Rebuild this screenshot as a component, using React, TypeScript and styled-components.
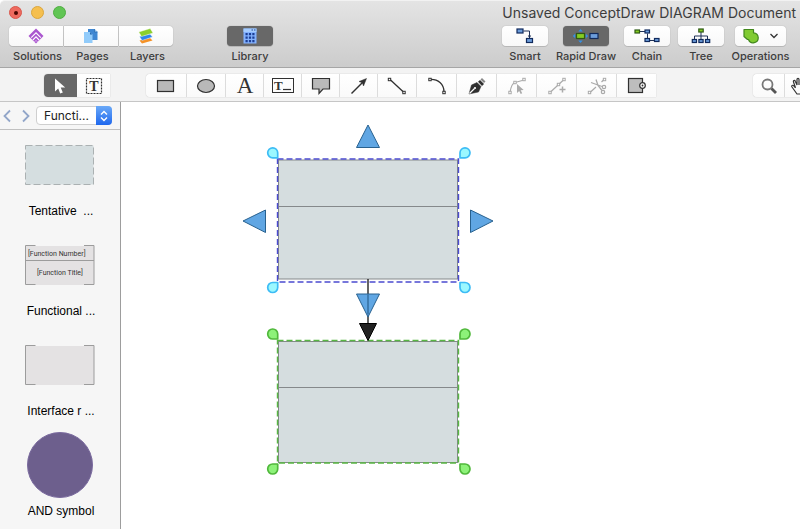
import React, { ReactNode } from 'react';
import styled, { createGlobalStyle, css } from 'styled-components';

const GlobalStyle = createGlobalStyle`
  *, *::before, *::after { box-sizing: border-box; }
  body { margin: 0; background: #fff; font-family: Inter, sans-serif; }
  button, select { font: inherit; color: inherit; }
  svg { display: block; flex: none; }
`;

const Window = styled.div`
  display: flex;
  flex-direction: column;
  min-height: 100vh;
  overflow: hidden;
  background: #fff;
`;

const Header = styled.header`
  background: linear-gradient(#e4e4e4, #cccccc);
  border-top: 1px solid #f2f2f2;
  border-bottom: 1px solid #a6a6a6;
  border-top-left-radius: 5px;
  color: #3d3d3d;
`;

const TitleBar = styled.div`
  display: flex;
  justify-content: space-between;
  align-items: center;
  height: 23px;
  padding: 0 4px 0 9px;
`;

const Lights = styled.div`
  display: flex;
  gap: 9px;
`;

const Light = styled.button<{ $fill: string; $edge: string }>`
  display: grid;
  place-items: center;
  width: 13px;
  height: 13px;
  padding: 0;
  border: 1px solid ${p => p.$edge};
  border-radius: 50%;
  background: ${p => p.$fill};
`;

const LightDot = styled.span`
  width: 4px;
  height: 4px;
  border-radius: 50%;
  background: #4a0602;
`;

const Title = styled.h1`
  margin: 0;
  font: 400 14px/20px Inter, sans-serif;
  white-space: nowrap;
`;

const MainTools = styled.div`
  display: flex;
  align-items: flex-start;
  justify-content: space-between;
  height: 43px;
  padding: 2px 11px 0 9px;
`;

const ToolSet = styled.div<{ $gap: number }>`
  display: flex;
  gap: ${p => p.$gap}px;
`;

const Tool = styled.button<{ $width: number }>`
  display: flex;
  flex-direction: column;
  align-items: center;
  width: ${p => p.$width}px;
  padding: 0;
  border: 0;
  background: none;
  font-size: 11px;
  font-weight: 500;
  line-height: 16px;
  white-space: nowrap;
`;

const Caption = styled.span<{ $grouped: boolean }>`
  padding-left: ${p => (p.$grouped ? 3 : 0)}px;
`;

type Edge = 'left' | 'middle' | 'right' | 'single';
const radii: Record<Edge, string> = {
  left: '4px 0 0 4px',
  middle: '0',
  right: '0 4px 4px 0',
  single: '4px',
};

const Face = styled.span<{ $width: number; $edge?: Edge; $active?: boolean }>`
  display: flex;
  align-items: center;
  justify-content: center;
  gap: 10px;
  width: ${p => p.$width}px;
  height: 20px;
  margin-bottom: 2px;
  border-radius: ${p => radii[p.$edge ?? 'single']};
  background: ${p => (p.$active ? '#686868' : 'linear-gradient(#ffffff, #f8f8f8)')};
  box-shadow: 0 0 1px rgba(0, 0, 0, 0.35), 0 1px 0 rgba(0, 0, 0, 0.1);
`;

const ShapeBar = styled.div`
  display: flex;
  align-items: center;
  justify-content: space-between;
  height: 34px;
  padding: 2px 0 0 44px;
  background: #f3f3f3;
  border-bottom: 1px solid #c6c6c6;
`;

const Segments = styled.div`
  display: flex;
  border-radius: 4px 0 0 4px;
  box-shadow: 0 0 1px rgba(0, 0, 0, 0.35);
  background: linear-gradient(#ffffff, #fafafa);
`;

const ShapeGroups = styled.div`
  display: flex;
  gap: 36px;
`;

const Segment = styled.button<{ $width: number; $active?: boolean }>`
  display: grid;
  place-items: center;
  width: ${p => p.$width}px;
  height: 23px;
  padding: 0;
  border: 0;
  border-right: 1px solid #dcdcdc;
  background: none;
  color: #303030;
  &:disabled { color: #aaaaaa; }
  &:last-child { border-right: 0; }
  ${p => p.$active && css`
    background: #686868;
    border-radius: 4px 0 0 4px;
    border-right-color: #686868;
  `}
`;

const Body = styled.div`
  display: flex;
  flex: 1;
`;

const Sidebar = styled.aside`
  flex: 0 0 121px;
  border-right: 1px solid #9d9d9d;
  background: #f6f6f6;
`;

const LibraryNav = styled.div`
  display: flex;
  align-items: center;
  gap: 4px;
  height: 28px;
  border-bottom: 1px solid #c0c0c0;
`;

const NavButton = styled.button`
  display: grid;
  place-items: center;
  width: 14px;
  height: 20px;
  padding: 0;
  border: 0;
  background: none;
`;

const SelectBox = styled.div`
  position: relative;
  width: 76px;
  height: 19px;
`;

const Select = styled.select`
  display: block;
  appearance: none;
  width: 100%;
  height: 100%;
  padding: 0 16px 0 7px;
  border: 1px solid #cfcfcf;
  border-radius: 4px;
  background: #fff;
  color: #222;
  font-size: 12px;
  line-height: 16px;
`;

const Stepper = styled.span`
  position: absolute;
  top: 0;
  right: 0;
  display: grid;
  place-items: center;
  width: 16px;
  height: 19px;
  border-radius: 0 4px 4px 0;
  background: linear-gradient(#6aa9f8, #1f68ee);
  pointer-events: none;
`;

const Items = styled.ul`
  margin: 0;
  padding: 1px 0 0;
  list-style: none;
`;

const Item = styled.li`
  display: flex;
  flex-direction: column;
  align-items: center;
  height: 100px;
`;

const Thumb = styled.div`
  display: grid;
  place-items: center;
  height: 68px;
  margin-right: 1px;
`;

const ItemLabel = styled.span`
  padding: 4px 0 0 2px;
  font: 12px/16px "Liberation Sans", Arial, sans-serif;
  color: #000;
  white-space: pre;
`;

const Canvas = styled.main`
  flex: 1;
  padding: 20px 0 0 119px;
  background: #fff;
`;

const SolutionsIcon = () => (
  <svg width="16" height="16" viewBox="0 0 16 16">
    <path d="M8 0.5 15.5 8 8 15.5 0.5 8Z" fill="#aa56cf" />
    <path d="M3.2 9.6 8 4.8l4.8 4.8M4.9 12 8 8.9l3.1 3.1" fill="none" stroke="#fff" strokeWidth="1.1" />
    <path d="M6.4 14 8 12.4 9.6 14" fill="none" stroke="#e6c9f1" strokeWidth="0.8" />
  </svg>
);

const PagesIcon = () => (
  <svg width="16" height="16" viewBox="0 0 16 16">
    <path d="M5 1h6.500l3 3v8H5Z" fill="#3f87d2" />
    <path d="M11.500 1v3h3" fill="#9bcaf5" stroke="#2466a9" strokeWidth="0.700" />
    <path d="M1 4h6l2.500 2.500V15H1Z" fill="#91cbfa" />
    <path d="M7 4v2.500h2.500Z" fill="#286bb0" />
  </svg>
);

const LayersIcon = () => (
  <svg width="16" height="16" viewBox="0 0 16 16">
    <path d="M1.500 12.500 12 10l2.500 2.500L4 15.500Z" fill="#f59227" />
    <path d="M1.500 8.500 12 6l2.500 3L4 12.500Z" fill="#2f85ec" stroke="#fff" strokeWidth="0.400" />
    <path d="M0.800 4 12.200 0.500l2.800 4.500L3.500 8.500Z" fill="#8bcf2d" stroke="#fff" strokeWidth="0.400" />
  </svg>
);

const LibraryIcon = () => (
  <svg width="14" height="16" viewBox="0 0 14 16">
    <rect x="0.500" y="0.500" width="13" height="15" fill="#83b2ff" />
    <path d="M0.500 0.500h13V4H0.500Z" fill="#a5ccff" />
    <path d="M8.500 2h1.500M11 2h1.500" stroke="#224a9a" strokeWidth="1.200" />
    <path d="M2.500 6.200h9M2.500 9.700h9M2.500 13.200h9" stroke="#1c3f96" strokeWidth="2.200" strokeDasharray="2.200 1.200" />
  </svg>
);

const Node = ({ x, y, w = 6, h = 4, green }: { x: number; y: number; w?: number; h?: number; green?: boolean }) => (
  <rect x={x} y={y} width={w} height={h} fill={green ? '#85cc22' : '#6c9ddb'} stroke={green ? '#2e5a14' : '#10295c'} strokeWidth="1.200" />
);

const SmartIcon = () => (
  <svg width="18" height="16" viewBox="0 0 18 16">
    <path d="M7.500 3h6v7" fill="none" stroke="#1f3157" />
    <path d="M11.800 7.500h3.400l-1.700 2.800Z" fill="#1f3157" />
    <Node x={1} y={1} w={6} h={4} />
    <Node x={10.500} y={10.500} w={6} h={4} />
  </svg>
);

const RapidIcon = () => (
  <svg width="28" height="16" viewBox="0 0 28 16">
    <path d="M6.300 3.600 8.500 1l2.200 2.600ZM6.300 12.400l2.200 2.600 2.200-2.600ZM3.200 5.700 0.800 8l2.400 2.300ZM13.800 5.700l2.400 2.300-2.400 2.300Z" fill="#3591e7" />
    <Node x={4.500} y={5.500} w={8} h={5} green />
    <Node x={18} y={5.500} w={8} h={5} />
  </svg>
);

const ChainIcon = () => (
  <svg width="26" height="16" viewBox="0 0 26 16">
    <path d="M6 3.500h5M13.500 5.500v7h7" fill="none" stroke="#1f3157" />
    <Node x={1} y={2} w={4.500} h={3} green />
    <Node x={11} y={2} w={4.500} h={3} />
    <Node x={11} y={10.500} w={4.500} h={3} />
    <Node x={20.500} y={10.500} w={4.500} h={3} />
  </svg>
);

const TreeIcon = () => (
  <svg width="20" height="16" viewBox="0 0 20 16">
    <path d="M10 4v8M3.500 12V8h13v4" fill="none" stroke="#1f3157" />
    <Node x={7.800} y={1} w={4.400} h={3} green />
    <Node x={1.300} y={11.500} w={4.200} h={3} />
    <Node x={7.900} y={11.500} w={4.200} h={3} />
    <Node x={14.500} y={11.500} w={4.200} h={3} />
  </svg>
);

const OperationsIcon = () => (
  <svg width="16" height="16" viewBox="0 0 16 16">
    <path d="M1 1.500h9.500v3.300a5 5 0 1 1-5 6.700H4.500L1 8.500Z" fill="#80cb31" stroke="#42881d" strokeWidth="1.200" strokeLinejoin="round" />
  </svg>
);

const ChevronDown = () => (
  <svg width="10" height="6" viewBox="0 0 10 6">
    <path d="M1.500 1 5 4.500l3.500-3.500" fill="none" stroke="#333" strokeWidth="1.300" />
  </svg>
);

const GlyphCanvas = styled.svg`
  overflow: visible;
`;

const Glyph = ({ children, size = 20 }: { children: ReactNode; size?: number }) => (
  <GlyphCanvas width={size} height="18" viewBox={`0 0 ${size} 18`} fill="none" stroke="currentColor" strokeWidth="1.200">
    {children}
  </GlyphCanvas>
);

const Handle = ({ x, y }: { x: number; y: number }) => (
  <rect x={x - 1.200} y={y - 1.200} width="2.400" height="2.400" fill="#fff" strokeWidth="1" />
);

const GlyphText = styled.text`
  fill: #333;
  stroke: none;
  font-family: "Liberation Serif", serif;
`;

const shapeTools: { name: string; width: number; disabled?: boolean; icon: ReactNode }[] = [
  { name: 'Rectangle', width: 41, icon: <Glyph><rect x="1.500" y="3.500" width="16" height="11" fill="#b9b9b9" /></Glyph> },
  { name: 'Ellipse', width: 39, icon: <Glyph><ellipse cx="10" cy="9" rx="8.500" ry="6.500" fill="#b9b9b9" /></Glyph> },
  { name: 'Text', width: 38, icon: <Glyph><GlyphText x="10" y="16" fontSize="23" textAnchor="middle">A</GlyphText></Glyph> },
  {
    name: 'Text box', width: 38, icon: (
      <Glyph size={24}>
        <rect x="1.500" y="1.500" width="21" height="14" strokeWidth="1" />
        <GlyphText x="3" y="13" fontSize="13" fontWeight="700">T</GlyphText>
        <path d="M12 12.500h8" />
      </Glyph>
    ),
  },
  { name: 'Callout', width: 38, icon: <Glyph><path d="M1.500 1.500h17v10.500H12l-4 4.500v-4.500H1.500Z" fill="#b9b9b9" /></Glyph> },
  {
    name: 'Arrow', width: 38, icon: (
      <Glyph><path d="M2.500 16.500 14 5" strokeWidth="1.500" /><path d="M17.500 1.500 10 4.500l3.300 1.200L14.500 9Z" fill="currentColor" strokeWidth="0.500" /></Glyph>
    ),
  },
  { name: 'Line', width: 39, icon: <Glyph><path d="m3 2.500 14 13" strokeWidth="1.300" /><Handle x={2.500} y={2.500} /><Handle x={17} y={15.500} /></Glyph> },
  { name: 'Arc', width: 40, icon: <Glyph><path d="M3 2.500C11 2 17 7 17 15" strokeWidth="1.300" /><Handle x={3} y={2.500} /><Handle x={17} y={15.500} /></Glyph> },
  {
    name: 'Pen', width: 40, icon: (
      <Glyph>
        <path d="M2 17 4.500 8 10 5.500l4 4L11.500 15Z" fill="currentColor" strokeWidth="0.500" />
        <path d="M11 4.800 13 3l4 4-2 2Z" fill="currentColor" stroke="none" />
        <path d="m13.500 2.500 1.500-1.500 3.500 3.500-1.500 1.500Z" fill="#888" stroke="none" />
        <path d="m2.500 16.500 5-5" stroke="#fff" /><circle cx="8" cy="11" r="1.100" fill="#fff" stroke="none" />
      </Glyph>
    ),
  },
  {
    name: 'Edit points', width: 40, disabled: true, icon: (
      <Glyph>
        <path d="M3 15.500C4 9 6 6 8 5.500L17 3" /><Handle x={3} y={15.500} /><Handle x={8} y={5.500} /><Handle x={17} y={2.500} />
        <path d="M10 7v9l2.200-2 1.500 3 1.500-.8-1.500-3 3-.2Z" fill="currentColor" stroke="none" />
      </Glyph>
    ),
  },
  {
    name: 'Add point', width: 40, disabled: true, icon: (
      <Glyph><path d="M3 15.500 17 2.500" /><Handle x={3} y={15.500} /><Handle x={11.500} y={7.500} /><Handle x={17} y={2.500} /><path d="M12.500 12.500h6M15.500 9.500v6" strokeWidth="1.500" /></Glyph>
    ),
  },
  {
    name: 'Split path', width: 40, disabled: true, icon: (
      <Glyph>
        <path d="M3 15.500 9 10M14.500 5l2.500-2.500" /><Handle x={2.500} y={15.500} /><Handle x={17.500} y={2.500} />
        <path d="M4 5.500 15 9.500M9 2.500l2 6 4 5" strokeWidth="1.300" />
        <circle cx="17" cy="10" r="1.700" /><circle cx="16" cy="15" r="1.700" />
      </Glyph>
    ),
  },
  {
    name: 'Shape action', width: 39, icon: (
      <Glyph>
        <rect x="1.500" y="1.500" width="14" height="14" fill="#bdbdbd" />
        <circle cx="15.500" cy="8.500" r="2.800" fill="#fff" strokeWidth="1.200" /><circle cx="15.500" cy="8.500" r="0.900" fill="currentColor" stroke="none" />
      </Glyph>
    ),
  },
];

const Brackets = ({ divided }: { divided?: boolean }) => (
  <svg width="70" height="41" viewBox="0 0 70 41" fill="none" stroke="#9c9c9c">
    <rect x="1" y="1" width="68" height="39" fill="#e4e2e3" stroke="none" />
    <path d="M10.500 0.500h-10v39h10M59 0.500h10v39h-10" />
    {divided && <path d="M0.500 15.500h68.500" />}
    {divided && (
      <g fill="#333" stroke="none" fontFamily="Roboto, sans-serif" fontSize="7">
        <text x="3" y="11">[Function Number]</text>
        <text x="12" y="30">[Function Title]</text>
      </g>
    )}
  </svg>
);

const libraryItems: { label: string; picture: ReactNode }[] = [
  {
    label: 'Tentative  ...',
    picture: (
      <svg width="70" height="41" viewBox="0 0 70 41">
        <rect x="0.500" y="0.500" width="68" height="39" fill="#d5dee0" stroke="#abb1b2" strokeDasharray="7 3" />
      </svg>
    ),
  },
  { label: 'Functional ...', picture: <Brackets divided /> },
  { label: 'Interface r ...', picture: <Brackets /> },
  {
    label: 'AND symbol',
    picture: (
      <svg width="66" height="66" viewBox="0 0 66 66">
        <circle cx="33" cy="33" r="32.500" fill="#6d5f8d" stroke="#7b6b9f" />
      </svg>
    ),
  },
];

const Drop = ({ x, y, turn, green }: { x: number; y: number; turn: number; green?: boolean }) => (
  <path
    transform={`translate(${x} ${y}) rotate(${turn})`}
    d="M5 5V0A5 5 0 1 0 0 5Z"
    fill={green ? '#8df279' : '#9bf8ff'}
    stroke={green ? '#50b83b' : '#3dbcf5'}
    strokeWidth="1.700"
    strokeLinejoin="round"
  />
);

const Block = ({ top, middle, bottom }: { top: number; middle: number; bottom: number }) => (
  <g stroke="#85898b">
    <rect x="278.500" y={top} width="179" height={bottom - top} fill="#d5dddf" />
    <path d={`M278 ${middle}h179`} />
  </g>
);

const Diagram = () => (
  <svg width="260" height="360" viewBox="240 122 260 360" role="img" aria-label="Two connected function blocks">
    <Block top={160} middle={206.500} bottom={279} />
    <rect x="277.500" y="159" width="181" height="123" fill="none" stroke="#4b4bd0" strokeWidth="1.400" strokeDasharray="6 3" />
    <Block top={341.500} middle={387.500} bottom={462.500} />
    <rect x="277.500" y="340.500" width="181" height="122.500" fill="none" stroke="#58b743" strokeWidth="1.400" strokeDasharray="6 3" />
    <path d="M368 279v46" stroke="#111" strokeWidth="1.300" />
    <path d="M359.500 323.500h17L368 340.500Z" fill="#222" stroke="#000" />
    <g fill="#60a6e3" stroke="#28618f">
      <path d="M368 125 379.500 147.500h-23Z" />
      <path d="M243 221 265.500 210v22.500Z" />
      <path d="M493 221 470.500 210v22.500Z" />
      <path d="M356.500 294h23L368 317Z" />
    </g>
    <path d="M368 294.500v20" stroke="#28618f" strokeWidth="1.200" />
    <Drop x={272.700} y={152.800} turn={0} />
    <Drop x={465} y={152.800} turn={90} />
    <Drop x={272.700} y={287.500} turn={270} />
    <Drop x={465} y={287.500} turn={180} />
    <Drop x={272.700} y={334} turn={0} green />
    <Drop x={465} y={334} turn={90} green />
    <Drop x={272.700} y={469} turn={270} green />
    <Drop x={465} y={469} turn={180} green />
  </svg>
);

const ToolButton = ({ label, icon, width, face, edge, active }: {
  label: string; icon: ReactNode; width: number; face: number; edge?: Edge; active?: boolean;
}) => (
  <Tool $width={width} type="button">
    <Face $width={face} $edge={edge} $active={active}>{icon}</Face>
    <Caption $grouped={edge !== undefined}>{label}</Caption>
  </Tool>
);

export default function App() {
  return (
    <Window>
      <GlobalStyle />
      <Header>
        <TitleBar>
          <Lights>
            <Light type="button" aria-label="Close" $fill="#ee6a5f" $edge="#d9574c"><LightDot /></Light>
            <Light type="button" aria-label="Minimize" $fill="#f5bf4f" $edge="#dba63c" />
            <Light type="button" aria-label="Zoom" $fill="#61c554" $edge="#50ad42" />
          </Lights>
          <Title>Unsaved ConceptDraw DIAGRAM Document</Title>
        </TitleBar>
        <MainTools>
          <ToolSet $gap={54}>
            <ToolSet $gap={1}>
              <ToolButton label="Solutions" icon={<SolutionsIcon />} width={54} face={54} edge="left" />
              <ToolButton label="Pages" icon={<PagesIcon />} width={54} face={54} edge="middle" />
              <ToolButton label="Layers" icon={<LayersIcon />} width={54} face={54} edge="right" />
            </ToolSet>
            <ToolButton label="Library" icon={<LibraryIcon />} width={46} face={46} active />
          </ToolSet>
          <ToolSet $gap={8}>
            <ToolButton label="Smart" icon={<SmartIcon />} width={46} face={46} />
            <ToolButton label="Rapid Draw" icon={<RapidIcon />} width={60} face={46} active />
            <ToolButton label="Chain" icon={<ChainIcon />} width={46} face={46} />
            <ToolButton label="Tree" icon={<TreeIcon />} width={46} face={46} />
            <ToolButton label="Operations" icon={<><OperationsIcon /><ChevronDown /></>} width={57} face={51} />
          </ToolSet>
        </MainTools>
      </Header>
      <ShapeBar>
        <ShapeGroups>
          <Segments>
            <Segment type="button" aria-label="Select" $width={33} $active>
              <svg width="14" height="18" viewBox="0 0 14 18">
                <path d="M2 1.500v13l3.200-3 2 5 2.600-1-2.100-5h4.500Z" fill="#fff" />
              </svg>
            </Segment>
            <Segment type="button" aria-label="Edit text" $width={33}>
              <Glyph size={18}>
                <rect x="1.500" y="1.500" width="15" height="15" strokeDasharray="2 1" />
                <GlyphText x="9" y="14" fontSize="14" fontWeight="700" textAnchor="middle">T</GlyphText>
              </Glyph>
            </Segment>
          </Segments>
          <Segments>
            {shapeTools.map(t => (
              <Segment key={t.name} type="button" aria-label={t.name} disabled={t.disabled} $width={t.width}>{t.icon}</Segment>
            ))}
          </Segments>
        </ShapeGroups>
        <Segments>
          <Segment type="button" aria-label="Magnifier" $width={32}>
            <Glyph><circle cx="8.500" cy="7.500" r="5" stroke="#777" strokeWidth="1.800" /><path d="m12.500 11.500 4.500 4.500" stroke="#555" strokeWidth="2.800" /></Glyph>
          </Segment>
          <Segment type="button" aria-label="Hand" $width={15}>
            <svg width="15" height="18" viewBox="0 0 15 18" fill="none" stroke="#333" strokeWidth="1.200">
              <path d="M15 17h-3L7 10c-1-1.500.8-2.300 1.800-1.200l1.700 2L8.500 5c-.6-1.500 1.200-2.200 1.800-.7L12 8V2.500c0-1.500 2-1.500 2 0V8" />
            </svg>
          </Segment>
        </Segments>
      </ShapeBar>
      <Body>
        <Sidebar>
          <LibraryNav>
            <NavButton type="button" aria-label="Previous library">
              <svg width="9" height="14" viewBox="0 0 9 14"><path d="M7 1.500 1.500 7 7 12.500" fill="none" stroke="#92a6c9" strokeWidth="1.800" /></svg>
            </NavButton>
            <NavButton type="button" aria-label="Next library">
              <svg width="9" height="14" viewBox="0 0 9 14"><path d="M2 1.500 7.500 7 2 12.500" fill="none" stroke="#92a6c9" strokeWidth="1.800" /></svg>
            </NavButton>
            <SelectBox>
              <Select aria-label="Library"><option>Functi...</option></Select>
              <Stepper>
                <svg width="8" height="12" viewBox="0 0 8 12" fill="none" stroke="#fff" strokeWidth="1.400">
                  <path d="m1 4.500 3-3 3 3M1 7.500l3 3 3-3" />
                </svg>
              </Stepper>
            </SelectBox>
          </LibraryNav>
          <Items>
            {libraryItems.map(i => (
              <Item key={i.label}>
                <Thumb>{i.picture}</Thumb>
                <ItemLabel>{i.label}</ItemLabel>
              </Item>
            ))}
          </Items>
        </Sidebar>
        <Canvas><Diagram /></Canvas>
      </Body>
    </Window>
  );
}
